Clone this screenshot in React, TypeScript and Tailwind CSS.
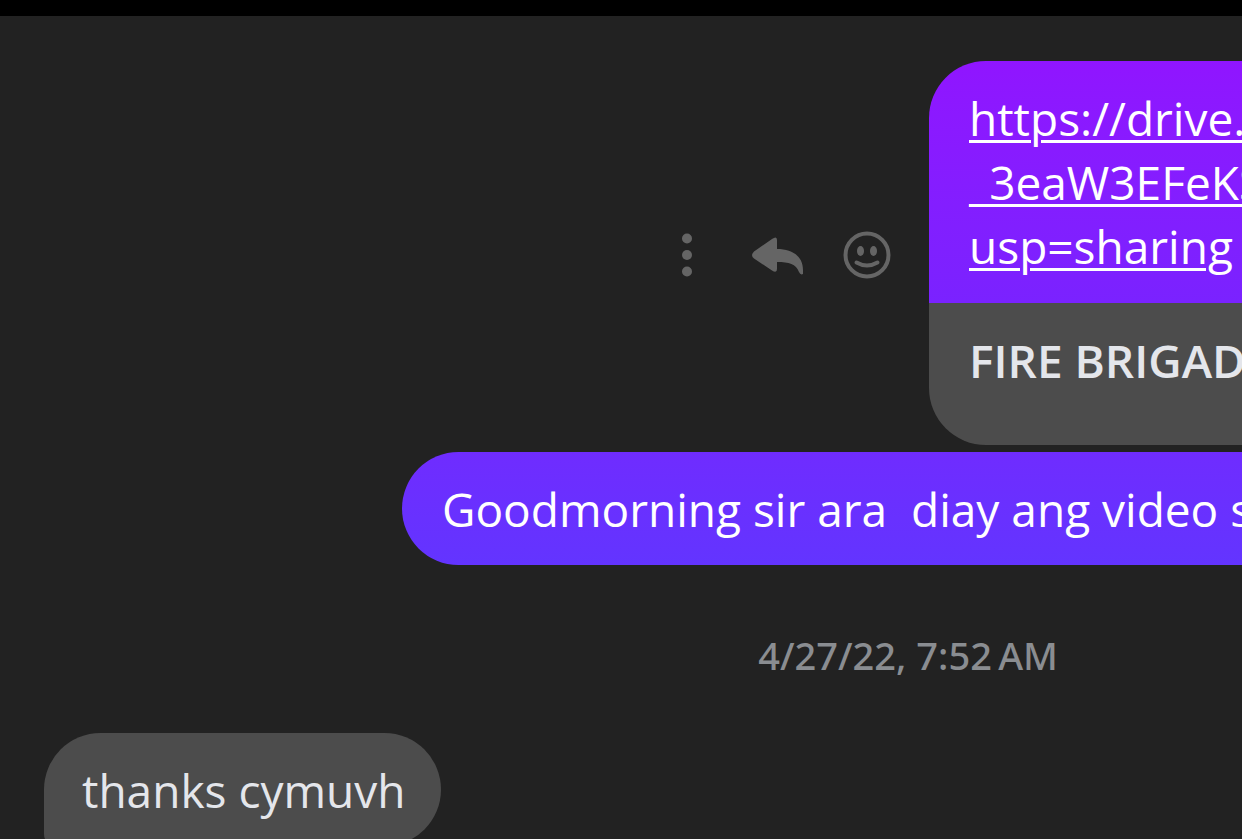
import { ReactNode } from "react";
import clsx from "clsx";

type BubbleProps = {
  className?: string;
  children: ReactNode;
};

function Bubble({ className, children }: BubbleProps) {
  return (
    <div className={clsx("overflow-hidden whitespace-pre text-[46px] leading-[64px]", className)}>
      {children}
    </div>
  );
}

function MessageActions() {
  return (
    <div className="flex items-center pt-1 text-[#656565]">
      <button type="button" aria-label="More" className="cursor-pointer">
        <svg className="h-[56px] w-[16px]" viewBox="0 0 16 56" fill="currentColor">
          <circle cx="8" cy="11.500" r="5" />
          <circle cx="8" cy="28" r="5" />
          <circle cx="8" cy="44.500" r="5" />
        </svg>
      </button>
      <button type="button" aria-label="Reply" className="ml-14 cursor-pointer">
        <svg className="h-[56px] w-[54px]" viewBox="0 0 54 56" fill="currentColor">
          <path d="M1 28 Q1 26.500 3 24.500 L21 12 Q26 8.500 26 13 V22 C41 22 52 29 52 43 V47 Q49.500 48.500 48 45 C45 37 38 35 26 35 V42 Q26 46.500 21 43.500 L3 31.500 Q1 30 1 28 Z" />
        </svg>
      </button>
      <button type="button" aria-label="React" className="ml-[38px] cursor-pointer">
        <svg className="h-[56px] w-[48px]" viewBox="0 0 48 56">
          <circle cx="24" cy="28" r="21.500" fill="none" stroke="currentColor" strokeWidth="4" />
          <ellipse cx="17.500" cy="24" rx="3.500" ry="5" fill="currentColor" />
          <ellipse cx="30.500" cy="24" rx="3.500" ry="5" fill="currentColor" />
          <path d="M13.500 35.500 Q24 41.500 34.500 35.500" fill="none" stroke="currentColor" strokeWidth="4" strokeLinecap="round" />
        </svg>
      </button>
    </div>
  );
}

export default function App() {
  return (
    <main className="h-screen overflow-hidden border-t-[16px] border-black bg-[#222222] pt-[45px] font-['Open_Sans','Noto_Sans',sans-serif]">
      <div className="flex items-center justify-end">
        <MessageActions />
        <div className="ml-[38px] w-[313px] shrink-0 overflow-hidden rounded-l-[57px]">
          <Bubble className="bg-linear-to-b from-[#9015ff] to-[#7a22ff] py-[25px] pl-10 text-white">
            <a href="#" className="underline decoration-3 underline-offset-4">
              {"https://drive.\n_3eaW3EFeKS\nusp=sharing"}
            </a>
          </Bubble>
          <Bubble className="bg-[#4c4c4c] pt-[25px] pb-[53px] pl-10 font-semibold text-[#e4e6eb]">
            FIRE BRIGADE
          </Bubble>
        </div>
      </div>

      <div className="mt-[7px] flex justify-end">
        <Bubble className="w-[840px] rounded-l-[57px] bg-linear-to-b from-[#6f2cff] to-[#6334ff] pt-[25px] pb-6 pl-10 text-white">
          {"Goodmorning sir ara  diay ang video s"}
        </Bubble>
      </div>

      <div className="mt-[64px] flex justify-end pr-[184px]">
        <time className="font-['Noto_Sans',sans-serif] text-[38px] leading-[52px] font-medium text-[#8a8d91]">
          4/27/22, 7:52{"\u202f"}AM
        </time>
      </div>

      <div className="mt-[52px] flex pl-11">
        <Bubble className="rounded-[57px] rounded-bl-xl bg-[#4c4c4c] pt-[25px] pr-9 pb-6 pl-[38px] text-[#e4e6eb]">
          thanks cymuvh
        </Bubble>
      </div>
    </main>
  );
}
